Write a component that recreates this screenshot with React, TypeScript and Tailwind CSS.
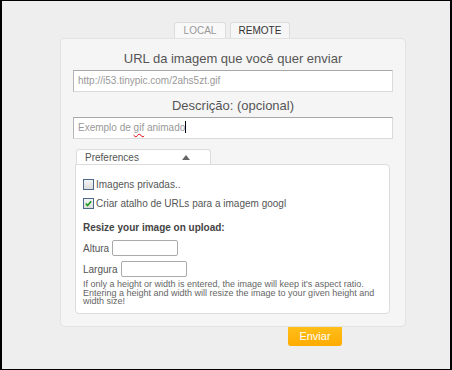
import React from "react";

function Checkbox({ checked }: { checked?: boolean }) {
  return (
    <span className="relative inline-block w-[11px] h-[11px] border border-[#4d6a8c] bg-gradient-to-b from-[#f4f4f4] to-[#dcdcdc] shrink-0">
      {checked && (
        <svg viewBox="0 0 10 10" className="absolute left-0 top-0 w-[9px] h-[9px]">
          <path d="M2 5 L4 7.2 L8 2.5" fill="none" stroke="#1c9a1c" strokeWidth="1.8" />
        </svg>
      )}
    </span>
  );
}

export default function App() {
  return (
    <div
      className="w-[452px] h-[370px] bg-[#eeeeee] border border-black border-l-2 border-r-2 pt-[21px] text-[#555]"
      style={{ fontFamily: '"Liberation Sans", Arial, sans-serif' }}
    >
      <div className="flex ml-[172px] gap-[4px]">
        <div className="w-[52px] h-[16px] bg-[#f8f8f8] border border-b-0 border-[#dcdcdc] rounded-t-[3px] text-[10px] leading-[15px] text-center text-[#999]">
          LOCAL
        </div>
        <div className="w-[60px] h-[16px] bg-[#f6f6f6] border border-b-0 border-[#dcdcdc] rounded-t-[3px] text-[10px] leading-[15px] text-center text-[#333]">
          REMOTE
        </div>
      </div>

      <div className="ml-[58px] w-[346px] bg-[#f5f5f5] border border-[#e2e2e2] rounded-[5px] rounded-tl-[3px] px-[12px] pb-[12px]">
        <div className="mt-[12px] text-[13px] leading-[15px] text-center text-[#555]">
          URL da imagem que você quer enviar
        </div>
        <div className="mt-[4px] h-[22px] bg-white border border-[#dadada] border-t-[#a8a8a8] border-l-[#b4b4b4] pl-[4px] text-[10px] leading-[20px] text-[#999]">
          http://i53.tinypic.com/2ahs5zt.gif
        </div>
        <div className="mt-[6px] text-[13px] leading-[15px] text-center text-[#555]">
          Descrição: (opcional)
        </div>
        <div className="mt-[4px] h-[22px] bg-white border border-[#dadada] border-t-[#a8a8a8] border-l-[#b4b4b4] pl-[4px] text-[10px] leading-[20px] text-[#999]">
          Exemplo de{" "}
          <span className="underline decoration-wavy decoration-red-600 underline-offset-2">gif</span>{" "}
          animado
          <span className="inline-block w-px h-[12px] bg-black align-middle -mt-[2px]" />
        </div>

        <div className="ml-[2px] mt-[10px] w-[315px]">
          <div className="ml-[1px] w-[135px] h-[16px] bg-white border border-b-0 border-[#dcdcdc] rounded-t-[3px] flex items-center pl-[8px] text-[10px] text-[#555]">
            <span>Preferences</span>
            <svg viewBox="0 0 8 5" className="ml-[43px] w-[8px] h-[5px]">
              <path d="M0 5 L4 0 L8 5 Z" fill="#666" />
            </svg>
          </div>
          <div className="-mt-px bg-white border border-[#dcdcdc] rounded-[4px] rounded-tl-none px-[7px] pt-[12px] pb-[7px] text-[10px]">
            <div className="flex items-center gap-[2px] h-[14px]">
              <Checkbox />
              <span>Imagens privadas..</span>
            </div>
            <div className="mt-[5px] flex items-center gap-[2px] h-[14px]">
              <Checkbox checked />
              <span>Criar atalho de URLs para a imagem googl</span>
            </div>
            <div className="mt-[11px] h-[14px] leading-[14px] font-bold text-[#444]">
              Resize your image on upload:
            </div>
            <div className="mt-[5px] flex items-center gap-[3px]">
              <span>Altura</span>
              <div className="w-[66px] h-[16px] bg-white border border-[#aaa] rounded-[2px]" />
            </div>
            <div className="mt-[5px] flex items-center gap-[4px]">
              <span>Largura</span>
              <div className="w-[66px] h-[16px] bg-white border border-[#aaa] rounded-[2px]" />
            </div>
            <div className="mt-[3px] text-[9px] leading-[8.5px] text-[#666] whitespace-nowrap">
              If only a height or width is entered, the image will keep it's aspect ratio.
              <br />
              Entering a height and width will resize the image to your given height and
              <br />
              width size!
            </div>
          </div>
        </div>
      </div>

      <div className="ml-[286px] w-[54px] h-[19px] bg-gradient-to-b from-[#ffbe17] to-[#ffab00] rounded-b-[3px] text-white text-[11px] leading-[19px] text-center">
        Enviar
      </div>
    </div>
  );
}
